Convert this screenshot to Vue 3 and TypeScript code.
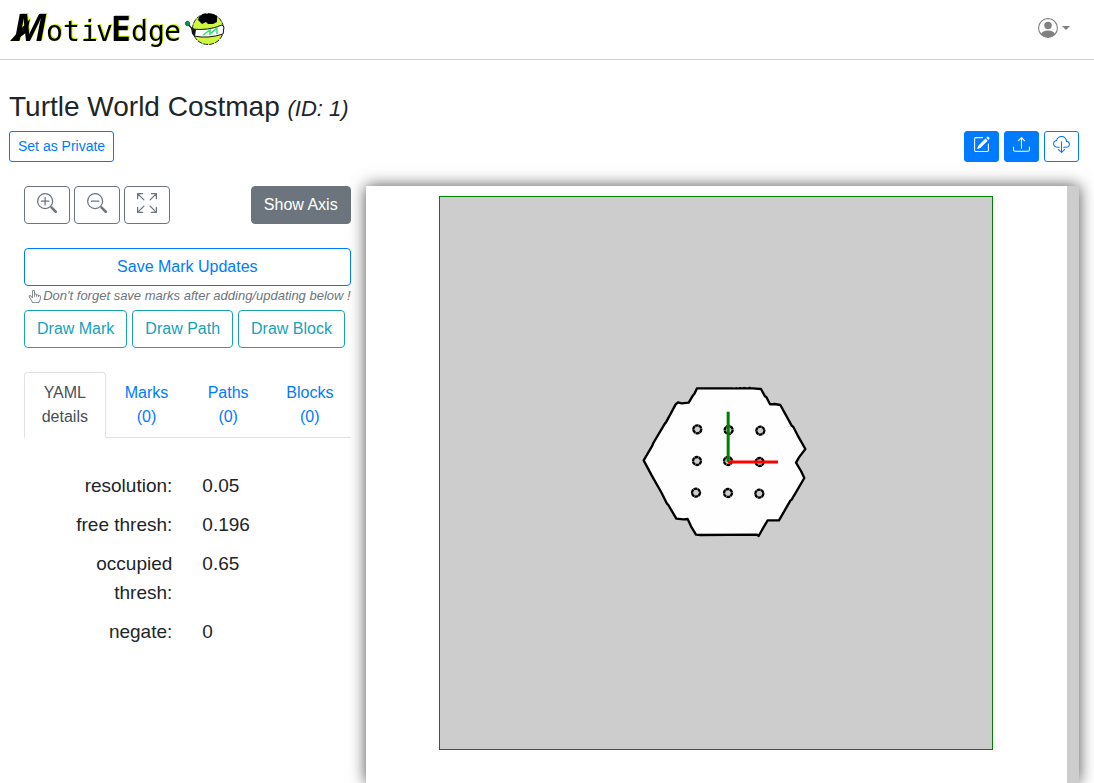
<script setup lang="ts">
import { ref } from 'vue'

interface Tab {
  id: string
  title: string
  note: string
}

const tabs: Tab[] = [
  { id: 'yaml', title: 'YAML', note: 'details' },
  { id: 'marks', title: 'Marks', note: '(0)' },
  { id: 'paths', title: 'Paths', note: '(0)' },
  { id: 'blocks', title: 'Blocks', note: '(0)' },
]

const details = [
  { label: 'resolution:', value: '0.05' },
  { label: 'free thresh:', value: '0.196' },
  { label: 'occupied thresh:', value: '0.65' },
  { label: 'negate:', value: '0' },
]

const drawTools = ['Draw Mark', 'Draw Path', 'Draw Block']
const activeTab = ref('yaml')

const pillars = [
  [187, 154], [281, 156], [376, 158],
  [186, 249], [279, 249], [374, 252],
  [183, 344], [279, 345], [373, 347],
]
</script>

<template>
  <div class="page">
    <header class="topbar">
      <a href="#" class="brand" aria-label="MotivEdge">
        <svg class="logo" width="216" height="40" viewBox="0 0 216 40">
          <g class="wordmark">
            <path d="M0 33 L20 11 L17 24 L5 33 Z" />
            <text class="logo-m" x="4" y="33">M</text>
            <text class="logo-text" x="36 53 71 86" y="33">otiv</text>
            <text class="logo-e" x="101" y="33">E</text>
            <text class="logo-text" x="121 138 154" y="33">dge</text>
          </g>
          <circle cx="198" cy="21" r="15.5" fill="#cdf83c" stroke="#222" stroke-width="1" stroke-dasharray="5 1" />
          <path d="M189 9 L193 6 H203 L207 8 V14 L203 16 H198 L196 14 L192 16 L188 12 Z" fill="#000" />
          <path d="M182 21 Q198 23 212 17 L214 19 L213 26 Q198 31 184 28 Z" fill="#fff" stroke="#111" stroke-width="1" />
          <path d="M181 19 L186 22 L185 28 L182 26 Z" fill="#111" />
          <path d="M193 27 L200 22 L200 26 L207 20 V26" fill="none" stroke="#2fe070" stroke-width="1.5" />
          <path d="M178 16 L183 22" stroke="#222" stroke-width="1.2" />
          <circle cx="177.500" cy="15.500" r="2.200" fill="#0a9a3c" stroke="#123" stroke-width=".6" />
        </svg>
      </a>
      <button class="account" aria-label="Account">
        <svg width="20" height="20" viewBox="0 0 16 16" fill="currentColor">
          <path d="M11 6a3 3 0 1 1-6 0 3 3 0 0 1 6 0z" />
          <path fill-rule="evenodd" d="M0 8a8 8 0 1 1 16 0A8 8 0 0 1 0 8zm8-7a7 7 0 0 0-5.468 11.370C3.242 11.226 4.805 10 8 10s4.757 1.225 5.468 2.370A7 7 0 0 0 8 1z" />
        </svg>
        <span class="caret"></span>
      </button>
    </header>

    <main class="content">
      <h1 class="title">Turtle World Costmap <em>(ID: 1)</em></h1>
      <div class="actions">
        <button class="btn small primary-outline">Set as Private</button>
        <div class="action-icons">
          <button class="btn small primary" aria-label="Edit">
            <svg width="17" height="17" viewBox="0 0 16 16" fill="currentColor">
              <path d="M15.502 1.940a.5.5 0 0 1 0 .706L14.459 3.690l-2-2L13.502.646a.5.5 0 0 1 .707 0l1.293 1.293zm-1.750 2.456-2-2L4.939 9.210a.5.5 0 0 0-.121.196l-.805 2.414a.25.25 0 0 0 .316.316l2.414-.805a.5.5 0 0 0 .196-.120l6.813-6.814z" />
              <path fill-rule="evenodd" d="M1 13.500A1.500 1.500 0 0 0 2.500 15h11a1.500 1.500 0 0 0 1.500-1.500v-6a.5.5 0 0 0-1 0v6a.5.5 0 0 1-.5.5h-11a.5.5 0 0 1-.5-.5v-11a.5.5 0 0 1 .5-.5H9a.5.5 0 0 0 0-1H2.500A1.500 1.500 0 0 0 1 2.500v11z" />
            </svg>
          </button>
          <button class="btn small primary" aria-label="Upload">
            <svg width="17" height="17" viewBox="0 0 16 16" fill="currentColor">
              <path d="M.5 9.900a.5.5 0 0 1 .5.5v2.500a1 1 0 0 0 1 1h12a1 1 0 0 0 1-1v-2.500a.5.5 0 0 1 1 0v2.500a2 2 0 0 1-2 2H2a2 2 0 0 1-2-2v-2.500a.5.5 0 0 1 .5-.5z" />
              <path d="M7.646 1.146a.5.5 0 0 1 .708 0l3 3a.5.5 0 0 1-.708.708L8.500 2.707V11.500a.5.5 0 0 1-1 0V2.707L5.354 4.854a.5.5 0 1 1-.708-.708l3-3z" />
            </svg>
          </button>
          <button class="btn small primary-outline" aria-label="Download">
            <svg width="17" height="17" viewBox="0 0 16 16" fill="currentColor">
              <path d="M4.406 1.342A5.530 5.530 0 0 1 8 0c2.690 0 4.923 2 5.166 4.579C14.758 4.804 16 6.137 16 7.773 16 9.569 14.502 11 12.687 11H10a.5.5 0 0 1 0-1h2.688C13.979 10 15 8.988 15 7.773c0-1.216-1.020-2.228-2.313-2.228h-.5v-.5C12.188 2.825 10.328 1 8 1a4.530 4.530 0 0 0-2.941 1.100c-.757.652-1.153 1.438-1.153 2.055v.448l-.445.049C2.064 4.805 1 5.952 1 7.318 1 8.785 2.230 10 3.781 10H6a.5.5 0 0 1 0 1H3.781C1.708 11 0 9.366 0 7.318c0-1.763 1.266-3.223 2.942-3.593.143-.863.698-1.723 1.464-2.383z" />
              <path d="M7.646 15.854a.5.5 0 0 0 .708 0l3-3a.5.5 0 0 0-.708-.708L8.500 14.293V5.500a.5.5 0 0 0-1 0v8.793l-2.146-2.147a.5.5 0 0 0-.708.708l3 3z" />
            </svg>
          </button>
        </div>
      </div>

      <div class="workspace">
        <section class="tools">
          <div class="view-row">
            <div class="zoom-buttons">
              <button class="btn secondary-outline" aria-label="Zoom in">
                <svg width="20" height="20" viewBox="0 0 16 16" fill="currentColor">
                  <path fill-rule="evenodd" d="M6.500 12a5.500 5.500 0 1 0 0-11 5.500 5.500 0 0 0 0 11zM13 6.500a6.500 6.500 0 1 1-13 0 6.500 6.500 0 0 1 13 0z" />
                  <path d="M10.344 11.742c.03.040.062.078.098.115l3.850 3.850a1 1 0 0 0 1.415-1.414l-3.850-3.850a1.007 1.007 0 0 0-.115-.1 6.538 6.538 0 0 1-1.398 1.400z" />
                  <path d="M6.500 3a.5.5 0 0 1 .5.5V6h2.500a.5.5 0 0 1 0 1H7v2.500a.5.5 0 0 1-1 0V7H3.500a.5.5 0 0 1 0-1H6V3.500a.5.5 0 0 1 .5-.5z" />
                </svg>
              </button>
              <button class="btn secondary-outline" aria-label="Zoom out">
                <svg width="20" height="20" viewBox="0 0 16 16" fill="currentColor">
                  <path fill-rule="evenodd" d="M6.500 12a5.500 5.500 0 1 0 0-11 5.500 5.500 0 0 0 0 11zM13 6.500a6.500 6.500 0 1 1-13 0 6.500 6.500 0 0 1 13 0z" />
                  <path d="M10.344 11.742c.03.040.062.078.098.115l3.850 3.850a1 1 0 0 0 1.415-1.414l-3.850-3.850a1.007 1.007 0 0 0-.115-.1 6.538 6.538 0 0 1-1.398 1.400z" />
                  <path d="M3 6.500a.5.5 0 0 1 .5-.5h6a.5.5 0 0 1 0 1h-6a.5.5 0 0 1-.5-.5z" />
                </svg>
              </button>
              <button class="btn secondary-outline" aria-label="Fit to screen">
                <svg width="20" height="20" viewBox="0 0 16 16" fill="none" stroke="currentColor" stroke-linecap="round" stroke-linejoin="round">
                  <path d="M5.500 5.500 L.5 .5 M.5 4.500 V.5 H4.500" />
                  <path d="M10.500 5.500 L15.500 .5 M11.500 .5 H15.500 V4.500" />
                  <path d="M5.500 10.500 L.5 15.500 M.5 11.500 V15.500 H4.500" />
                  <path d="M10.500 10.500 L15.500 15.500 M11.500 15.500 H15.500 V11.500" />
                </svg>
              </button>
            </div>
            <button class="btn secondary">Show Axis</button>
          </div>

          <button class="btn primary-outline save">Save Mark Updates</button>
          <p class="hint">
            <svg width="13" height="13" viewBox="0 0 16 16" fill="currentColor">
              <path d="M6.750 1a.75.75 0 0 1 .75.75V8a.5.5 0 0 0 1 0V5.467l.086-.004c.317-.012.637-.008.816.027.134.027.294.096.448.182.077.042.150.147.150.314V8a.5.5 0 0 0 1 0V6.435l.106-.010c.316-.024.584-.010.708.040.118.046.300.207.486.430.081.096.150.190.200.259V8.500a.5.5 0 1 0 1 0v-1h.342a1 1 0 0 1 .995 1.100l-.271 2.715a2.500 2.500 0 0 1-.317.991l-1.395 2.442a.5.5 0 0 1-.434.252H6.118a.5.5 0 0 1-.447-.276l-1.232-2.465-2.512-4.185a.517.517 0 0 1 .809-.631l2.410 2.410A.5.5 0 0 0 6 9.500V1.750A.75.75 0 0 1 6.750 1zM8.500 4.466V1.750a1.750 1.750 0 1 0-3.500 0v6.543L3.443 6.736A1.517 1.517 0 0 0 1.070 8.588l2.491 4.153 1.215 2.430A1.500 1.500 0 0 0 6.118 16h6.302a1.500 1.500 0 0 0 1.302-.756l1.395-2.441a3.500 3.500 0 0 0 .444-1.389l.271-2.715a2 2 0 0 0-1.990-2.199h-.581a5.114 5.114 0 0 0-.195-.248c-.191-.229-.510-.568-.880-.716-.364-.146-.846-.132-1.158-.108l-.132.012a1.260 1.260 0 0 0-.560-.642 2.632 2.632 0 0 0-.738-.288c-.310-.062-.739-.058-1.050-.046l-.048.002z" />
            </svg>
            <span>Don't forget save marks after adding/updating below !</span>
          </p>
          <div class="draw-row">
            <button v-for="tool in drawTools" :key="tool" class="btn info-outline">{{ tool }}</button>
          </div>

          <nav class="tabs">
            <a
              v-for="tab in tabs"
              :key="tab.id"
              href="#"
              class="tab"
              :class="{ active: tab.id === activeTab }"
              @click.prevent="activeTab = tab.id"
            >{{ tab.title }}<br>{{ tab.note }}</a>
          </nav>

          <dl class="details">
            <div v-for="row in details" :key="row.label" class="detail">
              <dt>{{ row.label }}</dt>
              <dd>{{ row.value }}</dd>
            </div>
          </dl>
        </section>

        <section class="viewer">
          <svg class="map" viewBox="0 0 552 552" role="img" aria-label="Costmap">
            <g transform="translate(195 181) scale(.33333)">
              <path
                class="wall"
                d="M26 247 L52 203 L55 195 L90 136 L93 133 L122 79 L129 73 L140 76 L161 74 L174 52 L178 48 L186 31 L292 31 L345 30 L378 33 L390 55 L394 57 L405 79 L419 78 L436 81 L470 143 L475 147 L490 176 L511 213 L492 238 L483 254 L498 279 L508 300 L470 365 L466 368 L432 427 L398 427 L385 449 L371 474 L366 470 L196 471 L183 470 L168 445 L158 423 L146 424 L124 422 L100 381 L96 377 L80 345 L50 292 Z"
              />
              <path class="gaps" d="M294 26 H302 M306 26 H313 M319 26 H325 M331 26 H341 M347 26 H376" />
              <circle v-for="([x, y], i) in pillars" :key="i" class="pillar" :cx="x" :cy="y" r="12" />
              <path class="axis-x" d="M279 252 H429" />
              <path class="axis-y" d="M279.500 101 V252" />
            </g>
          </svg>
        </section>
      </div>
    </main>
  </div>
</template>

<style>
body {
  margin: 0;
  background: #fff;
}
</style>

<style scoped>
.page {
  display: flex;
  flex-direction: column;
  min-height: 100vh;
  color: #212529;
  font: 16px/24px "Liberation Sans", Arial, sans-serif;
}

.page *,
.page {
  box-sizing: border-box;
}

.topbar {
  display: flex;
  align-items: center;
  justify-content: space-between;
  height: 60px;
  padding: 0 24px 4px 10px;
  border-bottom: 1px solid #c0ff00;
}

.brand,
.logo,
.btn svg {
  display: block;
}

.logo {
  overflow: visible;
}

.wordmark {
  filter: drop-shadow(1px -1px 0 #c4f000);
}

.logo-m {
  font: italic bold 38px "Liberation Sans", sans-serif;
}

.logo-text {
  font: 28px "DejaVu Sans Mono", monospace;
}

.logo-e {
  font: bold 33px "DejaVu Sans Mono", monospace;
}

.account {
  display: flex;
  align-items: center;
  gap: 4px;
  padding: 0;
  border: 0;
  background: none;
  color: #808080;
}

.caret {
  border: 4px solid transparent;
  border-top-color: currentColor;
  border-bottom: 0;
}

.content {
  display: flex;
  flex: 1;
  flex-direction: column;
  padding: 30px 15px 0 9px;
}

.title {
  margin: 0 0 5px;
  font-size: 28px;
  font-weight: 400;
  line-height: 34px;
}

.title em {
  font-size: 22px;
}

.actions {
  display: flex;
  justify-content: space-between;
  margin-bottom: 24px;
}

.action-icons {
  display: flex;
  gap: 5px;
}

.btn {
  padding: 6px 12px;
  border: 1px solid;
  border-radius: 4px;
  background: #fff;
  font: inherit;
  cursor: pointer;
}

.btn.small {
  padding: 4px 8px;
  border-radius: 3px;
  font-size: 14px;
  line-height: 21px;
}

.action-icons .btn.small {
  padding-bottom: 8px;
}

.btn.primary {
  border-color: #007bff;
  background: #007bff;
  color: #fff;
}

.primary-outline {
  color: #007bff;
}

.btn.secondary {
  border-color: #6c757d;
  background: #6c757d;
  color: #fff;
}

.secondary-outline {
  color: #6c757d;
}

.zoom-buttons .btn {
  padding-bottom: 10px;
}

.info-outline {
  color: #17a2b8;
}

.workspace {
  display: grid;
  flex: 1;
  grid-template-columns: 1fr 2fr;
}

.tools {
  min-width: 0;
  padding: 0 15px;
}

.view-row {
  display: flex;
  justify-content: space-between;
  height: 38px;
  margin-bottom: 24px;
}

.zoom-buttons {
  display: flex;
  gap: 4px;
}

.save {
  display: block;
  width: 100%;
}

.hint {
  display: flex;
  align-items: center;
  justify-content: flex-end;
  gap: 2px;
  margin: 0;
  padding-bottom: 4px;
  color: #6c757d;
  font-size: 13px;
  font-style: italic;
  line-height: 20px;
  white-space: nowrap;
}

.draw-row {
  display: flex;
  gap: 5px;
  margin-bottom: 24px;
  white-space: nowrap;
}

.tabs {
  display: grid;
  grid-template-columns: repeat(4, 1fr);
  border-bottom: 1px solid #dee2e6;
}

.tab {
  margin-bottom: -1px;
  padding: 8px;
  border: 1px solid transparent;
  border-radius: 4px 4px 0 0;
  color: #007bff;
  text-align: center;
  text-decoration: none;
}

.tab.active {
  border-color: #dee2e6 #dee2e6 #fff;
  background: #fff;
  color: #495057;
}

.details {
  display: grid;
  gap: 10px;
  margin: 33px 0 0;
  font-size: 19px;
  line-height: 29px;
}

.detail {
  display: grid;
  grid-template-columns: 1fr 1fr;
}

.detail dt,
.detail dd {
  margin: 0;
  padding: 0 15px;
}

.detail dt {
  text-align: right;
}

.viewer {
  min-width: 0;
  padding: 10px 0;
  border-right: 12px solid #cdcdcd;
  background: #fff;
  box-shadow: 0 0 15px rgba(0, 0, 0, .7);
}

.map {
  display: block;
  width: 100%;
  max-width: 554px;
  margin: 0 auto;
  border: 1px solid #008000;
  background: #cdcdcd;
}

.wall {
  fill: #fefefe;
  stroke: #000;
  stroke-width: 7;
  stroke-linejoin: round;
}

.gaps {
  stroke: #cdcdcd;
  stroke-width: 4;
}

.pillar {
  fill: #cdcdcd;
  stroke: #000;
  stroke-width: 7;
  stroke-dasharray: 11 1;
}

.axis-x,
.axis-y {
  stroke-width: 9;
}

.axis-x {
  stroke: #f00;
}

.axis-y {
  stroke: #008000;
}
</style>
